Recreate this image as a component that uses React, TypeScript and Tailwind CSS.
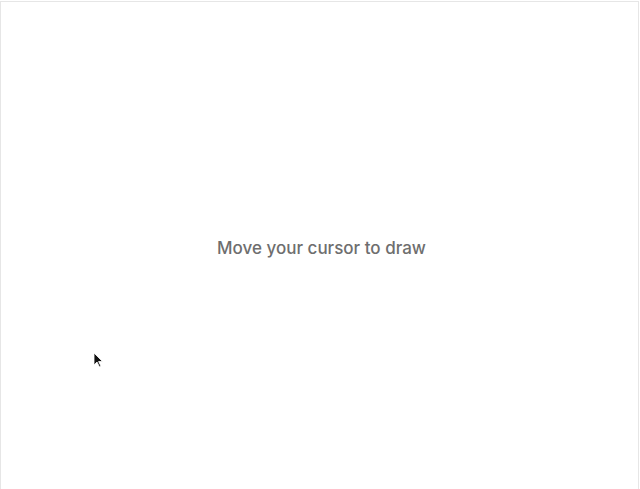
import React from 'react';

export default function App() {
  return (
    <div className="h-[489px] w-full bg-white p-0">
      <div className="relative h-full w-[639px] border-t border-l border-r border-[#e6e6e6] mt-px bg-white flex items-center justify-center">
        <p
          className="text-[17px] font-medium text-[#6e6e6e] pt-[5px] pl-[4px]"
          style={{ fontFamily: 'Inter, "Liberation Sans", sans-serif' }}
        >
          Move your cursor to draw
        </p>

        {/* cursor */}
        <svg
          className="absolute left-[92px] top-[350px]"
          width="11"
          height="16"
          viewBox="0 0 11 16"
        >
          <path d="M1 1 L1 13 L4 10 L6.5 15 L8 14.3 L5.6 9.5 L9.5 9.5 Z" fill="#111" stroke="#fff" strokeWidth="0.8" />
        </svg>
      </div>
    </div>
  );
}
